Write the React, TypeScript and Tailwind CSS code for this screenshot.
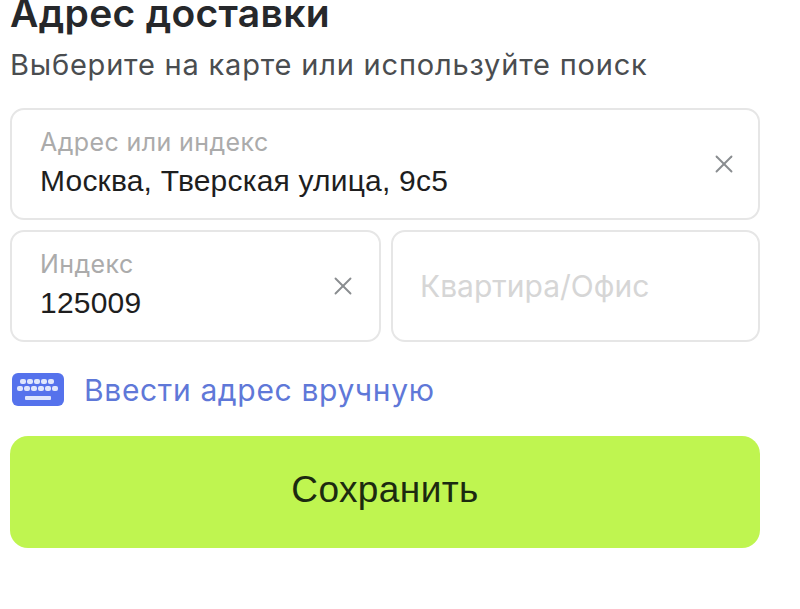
import { X } from "lucide-react";

function KeyboardIcon() {
  return (
    <svg width="52" height="33" viewBox="0 0 52 33" className="shrink-0">
      <rect x="0" y="0" width="52" height="33" rx="6" fill="#5572ec" />
      <g fill="#dfe6fc">
        {[8, 15, 22, 29, 36].map((x) => (
          <rect key={`a${x}`} x={x} y="6" width="6" height="5" rx="2" />
        ))}
        {[5, 12, 19, 26, 33, 40].map((x) => (
          <rect key={`b${x}`} x={x} y="13" width="6" height="5" rx="2" />
        ))}
        <rect x="13" y="23" width="26" height="4" rx="1" />
      </g>
    </svg>
  );
}

export default function App() {
  return (
    <div className="h-[609px] w-[800px] overflow-hidden bg-white pl-[10px] font-['Inter',sans-serif]">
      <h1 className="mt-[-9px] h-[44px] text-[39px] leading-[44px] font-semibold tracking-[0.3px] whitespace-nowrap text-[#26282b]">
        Адрес доставки
      </h1>
      <p className="mt-[11px] text-[29px] leading-[38px] tracking-[0.8px] whitespace-nowrap text-[#4a4d50]">
        Выберите на карте или используйте поиск
      </p>

      <div className="mt-[24px] w-[750px] space-y-[10px]">
        <div className="flex h-[112px] items-center justify-between rounded-[14px] border-2 border-[#e6e6e6] pr-[19px] pl-[28px]">
          <div className="pb-[4px]">
            <div className="text-[25px] leading-[32px] tracking-[0.4px] text-[#ababab]">Адрес или индекс</div>
            <div className="mt-[5px] font-['Liberation_Sans',sans-serif] text-[30px] leading-[36px] tracking-[0.2px] text-[#1e1e1e]">Москва, Тверская улица, 9с5</div>
          </div>
          <X size={30} strokeWidth={1.5} className="text-[#8a8d90]" />
        </div>

        <div className="flex gap-[10px]">
          <div className="flex h-[112px] w-[371px] items-center justify-between rounded-[14px] border-2 border-[#e6e6e6] pr-[21px] pl-[28px]">
            <div className="pb-[4px]">
              <div className="text-[25px] leading-[32px] tracking-[0.4px] text-[#ababab]">Индекс</div>
              <div className="mt-[5px] font-['Liberation_Sans',sans-serif] text-[30px] leading-[36px] tracking-[0.2px] text-[#1e1e1e]">125009</div>
            </div>
            <X size={30} strokeWidth={1.5} className="text-[#8a8d90]" />
          </div>
          <div className="flex h-[112px] flex-1 items-center rounded-[14px] border-2 border-[#e6e6e6] pl-[27px]">
            <span className="text-[30px] text-[#d6d6d6]">Квартира/Офис</span>
          </div>
        </div>
      </div>

      <div className="mt-[31px] flex h-[33px] items-center gap-[20px] pl-[2px]">
        <KeyboardIcon />
        <span className="text-[30px] leading-[36px] tracking-[0.65px] whitespace-nowrap text-[#5f78d8]">Ввести адрес вручную</span>
      </div>

      <button className="mt-[30px] flex h-[112px] w-[750px] items-center justify-center rounded-[18px] bg-[#bff550] pb-[4px] font-['Liberation_Sans',sans-serif] text-[37px] tracking-[0.4px] text-[#1c2a10]">
        Сохранить
      </button>
    </div>
  );
}
